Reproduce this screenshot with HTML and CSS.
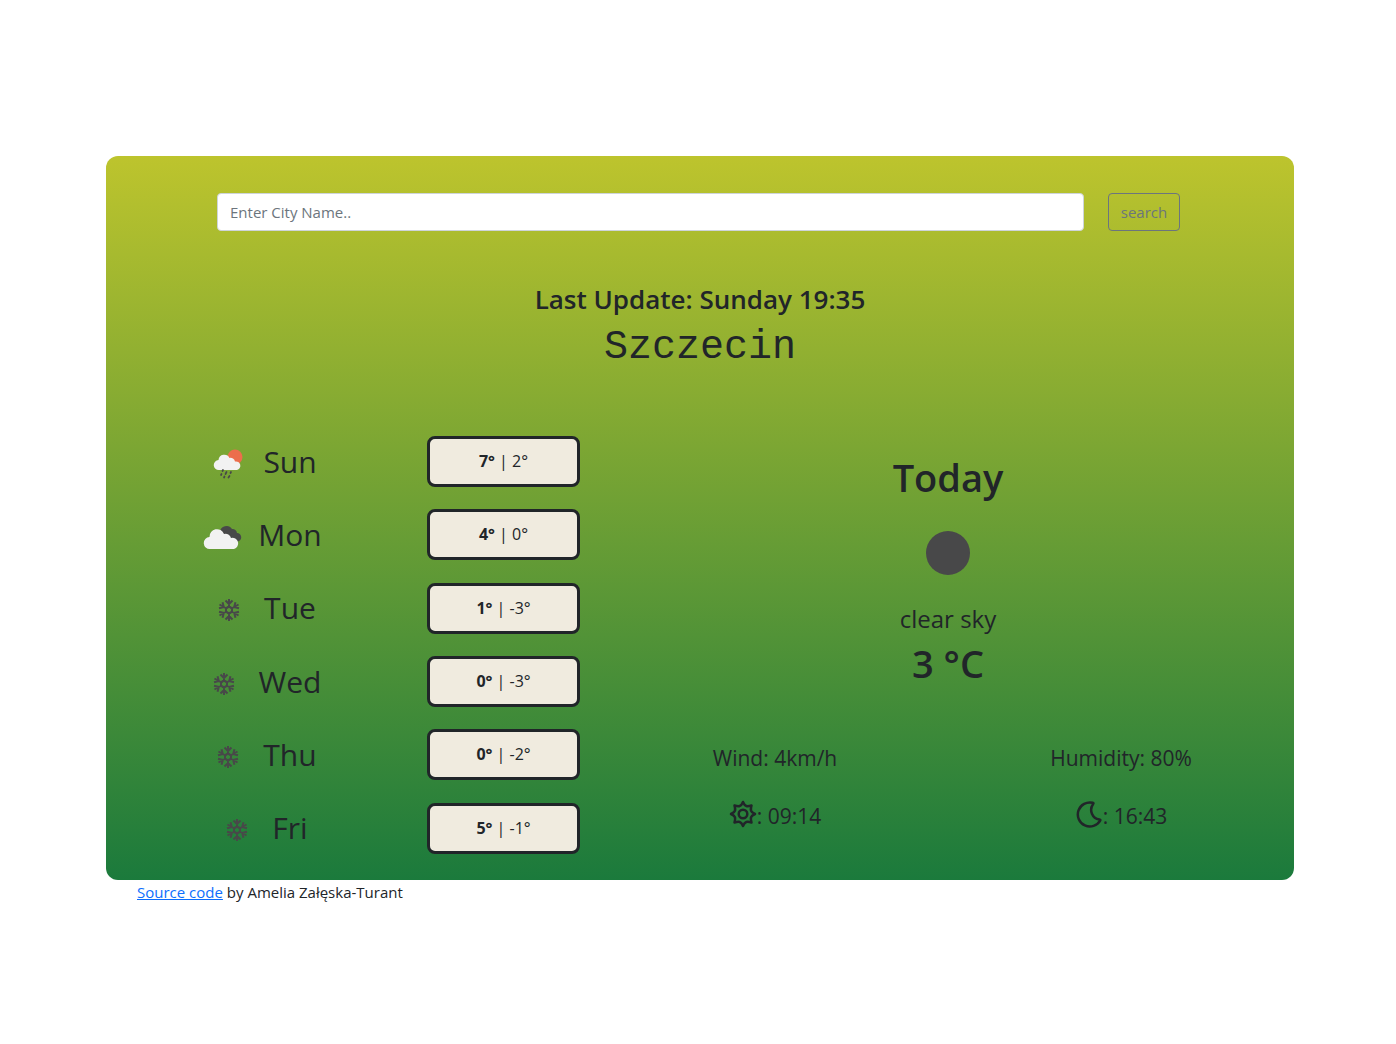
FILE: index.html
```html
<!DOCTYPE html>
<html lang="en">
<head>
<meta charset="utf-8">
<title>Weather</title>
<link rel="stylesheet" href="styles.css">
</head>
<body>
<svg class="defs" width="0" height="0" aria-hidden="true">
  <symbol id="snow" viewBox="0 0 50 50">
    <g fill="none" stroke="#484849" stroke-width="2">
      <g id="arm"><path d="M25 22V14M21.500 15.500L25 19L28.500 15.500M22 23.300L25 21.500L28 23.300"/></g>
      <use href="#arm" transform="rotate(60 25 25)"/>
      <use href="#arm" transform="rotate(120 25 25)"/>
      <use href="#arm" transform="rotate(180 25 25)"/>
      <use href="#arm" transform="rotate(240 25 25)"/>
      <use href="#arm" transform="rotate(300 25 25)"/>
    </g>
  </symbol>
  <symbol id="rain" viewBox="0 0 50 50">
    <circle cx="32" cy="18" r="7.500" fill="#ec6e4c"/>
    <path fill="#f2f2f2" d="M16 31a5 5 0 0 1-.5-10 5.800 5.800 0 0 1 11-2 4.500 4.500 0 0 1 5.500 3.500 4.300 4.300 0 0 1 2 8.500z"/>
    <path fill="none" stroke="#484849" stroke-width="1.700" stroke-linecap="round" d="M20 31l-.5 1M23.500 33l-1 2M28 33l-.5 1M18.500 35l-.5 1M21.500 37.500l-.5 1M26.500 37l-1 1.500"/>
  </symbol>
  <symbol id="clouds" viewBox="0 0 50 50">
    <path fill="#484849" d="M22 20a6.500 6.500 0 0 1 12-3 4.500 4.500 0 0 1 5 4 4 4 0 1 1 0 8.500H30z"/>
    <path fill="#f2f2f2" d="M12 37a6 6 0 0 1-.5-12 7.500 7.500 0 0 1 14.500-3 5.500 5.500 0 0 1 7 4 5.600 5.600 0 0 1 3 11z"/>
  </symbol>
</svg>
<div class="page">
  <main class="card">
    <form class="search">
      <input class="search-input" type="text" placeholder="Enter City Name.." aria-label="City name">
      <button class="search-button" type="button">search</button>
    </form>
    <header class="heading">
      <h2 class="update">Last Update: Sunday 19:35</h2>
      <h1 class="city">Szczecin</h1>
    </header>
    <div class="weather">
      <ul class="forecast">
        <li class="row"><div class="day"><svg class="day-icon"><use href="#rain"/></svg><span>Sun</span></div><div class="temps"><b>7°</b> | 2°</div></li>
        <li class="row"><div class="day"><svg class="day-icon"><use href="#clouds"/></svg><span>Mon</span></div><div class="temps"><b>4°</b> | 0°</div></li>
        <li class="row"><div class="day"><svg class="day-icon"><use href="#snow"/></svg><span>Tue</span></div><div class="temps"><b>1°</b> | -3°</div></li>
        <li class="row"><div class="day"><svg class="day-icon"><use href="#snow"/></svg><span>Wed</span></div><div class="temps"><b>0°</b> | -3°</div></li>
        <li class="row"><div class="day"><svg class="day-icon"><use href="#snow"/></svg><span>Thu</span></div><div class="temps"><b>0°</b> | -2°</div></li>
        <li class="row"><div class="day"><svg class="day-icon"><use href="#snow"/></svg><span>Fri</span></div><div class="temps"><b>5°</b> | -1°</div></li>
      </ul>
      <section class="today">
        <h2 class="today-title">Today</h2>
        <svg class="today-icon" viewBox="0 0 100 100"><circle cx="50" cy="50" r="22" fill="#484849"/></svg>
        <p class="sky">clear sky</p>
        <p class="now">3 °C</p>
        <div class="details">
          <span>Wind: 4km/h</span>
          <span>Humidity: 80%</span>
          <span class="time"><svg class="glyph" viewBox="0 0 28 28"><path d="M14 2Q15.500 5.500 17.300 6Q19 6.500 22.500 5.500Q21.500 9 22 10.700Q22.500 12.500 26 14Q22.500 15.500 22 17.300Q21.500 19 22.500 22.500Q19 21.500 17.300 22Q15.500 22.500 14 26Q12.500 22.500 10.700 22Q9 21.500 5.500 22.500Q6.500 19 6 17.300Q5.500 15.500 2 14Q5.500 12.500 6 10.700Q6.500 9 5.500 5.500Q9 6.500 10.700 6Q12.500 5.500 14 2Z"/><circle cx="14" cy="14" r="4.300"/></svg>: 09:14</span>
          <span class="time"><svg class="glyph" viewBox="0 0 28 28"><path d="M17.800 2.800A12 12 0 1 0 25.300 20.300Q25.500 19.400 24.300 19.600A9.800 9.800 0 0 1 18 4.300Q19 3 17.800 2.800Z"/></svg>: 16:43</span>
        </div>
      </section>
    </div>
  </main>
  <footer class="credit"><a href="#">Source code</a> by Amelia Załęska-Turant</footer>
</div>
</body>
</html>
```
FILE: styles.css
```css
* { box-sizing: border-box; }
body {
  margin: 0;
  background: #fff;
  color: #212529;
  font: 15px/24px "Open Sans", "Noto Sans", sans-serif;
}
h1, h2, p, ul { margin: 0; padding: 0; }
.defs { display: block; }
.page { padding: 156px 102px 0 106px; }
.card {
  padding: 37px 0 15px;
  border-radius: 12px;
  background: linear-gradient(#bdc42d, #1b7a3c);
}
.search {
  display: flex;
  gap: 24px;
  padding: 0 114px 0 111px;
}
.search-input, .search-button {
  height: 38px;
  padding: 6px 12px;
  border: 1px solid #ced4da;
  border-radius: 4px;
  font: inherit;
}
.search-input { flex: 1; min-width: 0; background: #fff; }
.search-input::placeholder { color: #6c757d; opacity: 1; }
.search-button {
  width: 72px;
  padding: 0;
  border-color: #6c757d;
  background: none;
  color: #6c757d;
}
.heading { padding-top: 51px; text-align: center; }
.update { font-size: 26px; line-height: 34px; font-weight: 600; }
.city {
  padding-top: 8px;
  font: 400 40px/48px "Liberation Mono", monospace;
}
.weather {
  display: grid;
  grid-template-columns: 487fr 701fr;
  padding-top: 53px;
}
.forecast {
  display: grid;
  grid-auto-rows: 1fr;
  min-height: 440px;
  list-style: none;
}
.row {
  display: grid;
  grid-template-columns: 308fr 179fr;
  align-items: center;
}
.day {
  display: flex;
  align-items: center;
  justify-content: center;
  gap: 10px;
  font-size: 30px;
  line-height: 46px;
}
.day-icon { width: 50px; height: 50px; margin-top: 4px; }
.temps {
  justify-self: center;
  width: 153px;
  padding: 11px 0;
  border: 3px solid #212529;
  border-radius: 8px;
  background: #f0ebdf;
  font-size: 16px;
  line-height: 23px;
  text-align: center;
}
.today {
  padding: 28px 0 0 9px;
  text-align: center;
}
.today-title { font-size: 38px; line-height: 48px; font-weight: 600; }
.today-icon { display: block; width: 100px; height: 100px; margin: 2px auto 0; }
.sky { font-size: 24px; line-height: 32px; }
.now { font-size: 38px; line-height: 56px; font-weight: 600; }
.details {
  display: grid;
  grid-template-columns: 1fr 1fr;
  row-gap: 24px;
  padding-top: 50px;
  font-size: 21px;
  line-height: 34px;
}
.time { display: flex; align-items: center; justify-content: center; }
.glyph {
  width: 28px;
  height: 28px;
  margin-bottom: 4px;
  fill: none;
  stroke: currentColor;
  stroke-width: 2.5;
  stroke-linejoin: round;
}
.credit { padding-left: 31px; }
.credit a { color: #0d6efd; }
```
